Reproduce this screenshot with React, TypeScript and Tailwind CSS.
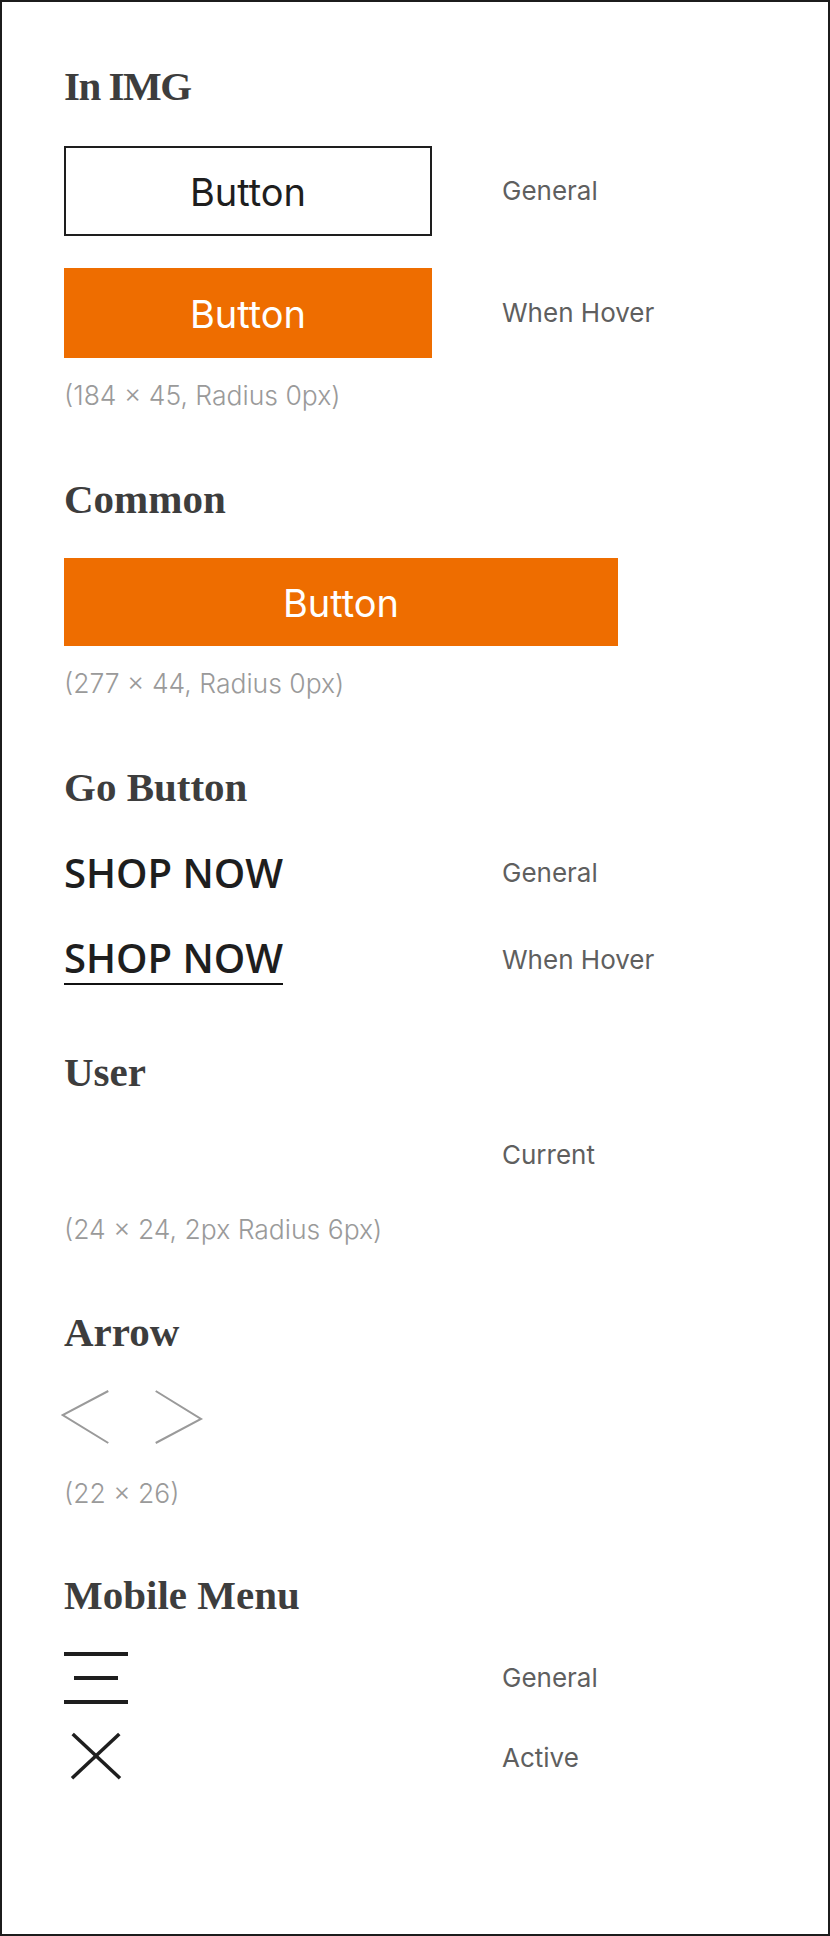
import React from "react";

const serif = { fontFamily: '"Liberation Serif", "Times New Roman", serif' } as const;

function Heading({ children, className = "" }: { children: React.ReactNode; className?: string }) {
  return (
    <h2
      className={`text-[41px] leading-[48px] h-[48px] font-bold text-[#3d3d3d] whitespace-nowrap ${className}`}
      style={serif}
    >
      {children}
    </h2>
  );
}

function Label({ children, className = "" }: { children: React.ReactNode; className?: string }) {
  return (
    <span className={`text-[26px] leading-[32px] text-[#5f5f5f] font-[Inter] whitespace-nowrap ${className}`}>
      {children}
    </span>
  );
}

function Note({ children, className = "" }: { children: React.ReactNode; className?: string }) {
  return (
    <p className={`text-[26.5px] leading-[30px] h-[30px] text-[#9a9a9a] font-[Inter] font-light whitespace-nowrap ${className}`}>
      {children}
    </p>
  );
}

function Row({
  left,
  label,
  className = "",
  labelClass = "",
}: {
  left: React.ReactNode;
  label: string;
  className?: string;
  labelClass?: string;
}) {
  return (
    <div className={`flex items-center ${className}`}>
      <div className="w-[438px] shrink-0 flex items-center">{left}</div>
      <Label className={labelClass}>{label}</Label>
    </div>
  );
}

export default function App() {
  return (
    <div className="w-[830px] h-[1936px] border-2 border-[#1c1c1c] bg-white pt-[60px] pl-[62px] font-[Inter]">
      <Heading className="tracking-[-1.5px]">In IMG</Heading>

      <Row
        className="mt-[36px]"
        left={
          <div className="w-[368px] h-[90px] border-2 border-[#1e1e1e] flex items-center justify-center pt-[3px] text-[38px] text-[#1e1e1e]">
            Button
          </div>
        }
        label="General"
      />
      <Row
        className="mt-[32px]"
        left={
          <div className="w-[368px] h-[90px] bg-[#ee6d00] flex items-center justify-center pt-[3px] text-[38px] text-white">
            Button
          </div>
        }
        label="When Hover"
      />
      <Note className="mt-[22px]">(184 × 45, Radius 0px)</Note>

      <Heading className="mt-[65px]">Common</Heading>
      <div className="mt-[35px] w-[554px] h-[88px] bg-[#ee6d00] flex items-center justify-center pt-[3px] text-[38px] text-white">
        Button
      </div>
      <Note className="mt-[22px]">(277 × 44, Radius 0px)</Note>

      <Heading className="mt-[65px]">Go Button</Heading>
      <Row
        className="mt-[38px]"
        left={
          <span
            className="text-[40px] leading-[48px] font-semibold text-[#1e1e1e]"
            style={{ fontFamily: '"Open Sans", sans-serif' }}
          >
            SHOP NOW
          </span>
        }
        label="General"
      />
      <Row
        className="mt-[37px]"
        left={
          <span
            className="text-[40px] leading-[48px] font-semibold text-[#1e1e1e] border-b-2 border-[#111] pb-[1px]"
            style={{ fontFamily: '"Open Sans", sans-serif' }}
          >
            SHOP NOW
          </span>
        }
        label="When Hover"
      />

      <Heading className="mt-[63px]">User</Heading>
      <Row className="mt-[35px] h-[48px]" left={<div className="w-[48px] h-[48px]" />} label="Current" />
      <Note className="mt-[35px]">(24 × 24, 2px Radius 6px)</Note>

      <Heading className="mt-[64px]">Arrow</Heading>
      <div className="mt-[33px] -ml-[2px] flex items-start gap-[44px] h-[56px]">
        <svg width="48" height="56" viewBox="0 0 48 56" fill="none" className="overflow-visible">
          <polyline points="46.3,2 0.7,26 46.3,54" stroke="#9a9a9a" strokeWidth="2" />
        </svg>
        <svg width="50" height="56" viewBox="0 0 50 56" fill="none" className="overflow-visible">
          <polyline points="1.7,2 47,30 1.7,54" stroke="#9a9a9a" strokeWidth="2" />
        </svg>
      </div>
      <Note className="mt-[33px]">(22 × 26)</Note>

      <Heading className="mt-[63px]">Mobile Menu</Heading>
      <Row
        className="mt-[33px]"
        left={
          <div className="w-[64px] h-[52px] flex flex-col justify-between">
            <div className="h-[4px] w-[64px] bg-[#1e1e1e]" />
            <div className="h-[4px] w-[44px] ml-[10px] bg-[#1e1e1e]" />
            <div className="h-[4px] w-[64px] bg-[#1e1e1e]" />
          </div>
        }
        label="General"
      />
      <Row
        className="mt-[28px] h-[48px]"
        labelClass="pt-[4px]"
        left={
          <svg width="64" height="48" viewBox="0 0 64 48" fill="none">
            <line x1="8.7" y1="2" x2="56" y2="46.3" stroke="#1e1e1e" strokeWidth="3.5" />
            <line x1="55.3" y1="2" x2="8" y2="46.3" stroke="#1e1e1e" strokeWidth="3.5" />
          </svg>
        }
        label="Active"
      />
    </div>
  );
}
